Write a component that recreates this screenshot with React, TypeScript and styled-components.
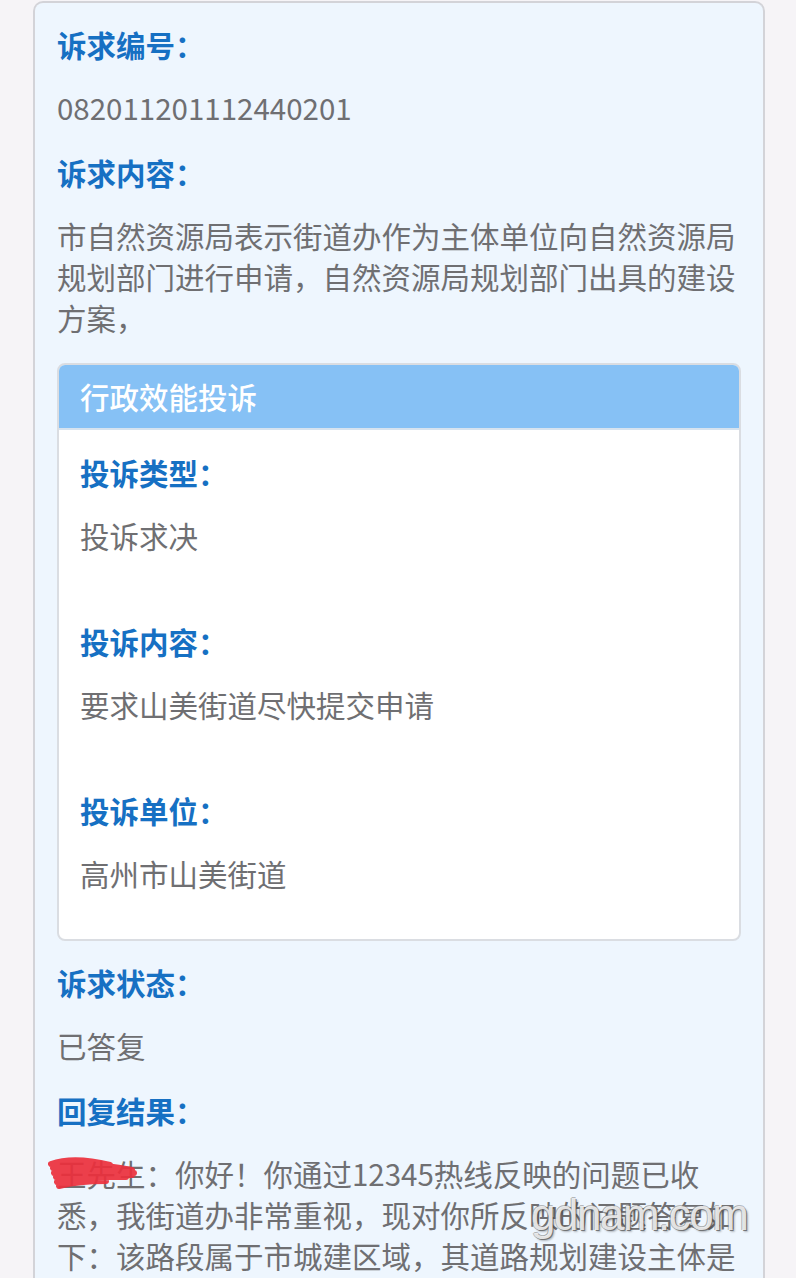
import React from "react";
import styled, { createGlobalStyle } from "styled-components";

const GlobalStyle = createGlobalStyle`
  html, body {
    margin: 0;
    padding: 0;
    background: #f6f4f7;
  }
  body {
    font-family: "Noto Sans CJK SC", "Noto Sans", sans-serif;
  }
`;

const Page = styled.div`
  height: 1278px;
  overflow: hidden;
  padding: 1px 31px 0 33px;
  box-sizing: border-box;
`;

const Card = styled.div`
  background: #eef6fe;
  border: 2px solid #d3d3d8;
  border-bottom: none;
  border-radius: 10px 10px 0 0;
  padding: 21px 22px 40px;
  min-height: 1300px;
  box-sizing: border-box;
`;

const Field = styled.div<{ $gap?: number }>`
  margin-bottom: ${(p) => (p.$gap ?? 24)}px;
`;

const Label = styled.div`
  font-size: 29.5px;
  line-height: 41px;
  font-weight: 700;
  color: #1670c3;
  margin-bottom: 22px;
`;

const Value = styled.div`
  position: relative;
  font-size: 29.5px;
  line-height: 41px;
  color: #6f6f72;
`;

const Complaint = styled.div`
  border: 2px solid #dadde2;
  border-radius: 8px;
  overflow: hidden;
  background: #ffffff;
  margin: 0 0 21px;
`;

const ComplaintHead = styled.div`
  background: #86c1f5;
  color: #ffffff;
  height: 63px;
  line-height: 63px;
  padding: 0 21px;
  font-size: 29.5px;
  font-weight: 500;
  border-bottom: 2px solid #d6e3ef;
`;

const ComplaintBody = styled.div`
  padding: 22px 21px 45px;
`;

const Scribble = styled.svg`
  position: absolute;
  left: -9px;
  top: 2px;
  width: 90px;
  height: 36px;
  pointer-events: none;
`;

const Watermark = styled.span`
  position: absolute;
  left: 474px;
  top: 38px;
  font-family: "Liberation Sans", sans-serif;
  font-size: 44px;
  line-height: 48px;
  letter-spacing: -1.5px;
  color: rgba(255, 255, 255, 0.82);
  text-shadow: 1px 1px 0 rgba(90, 90, 90, 0.75), -1px 0 0 rgba(120, 120, 120, 0.5),
    0 -1px 0 rgba(120, 120, 120, 0.5), 2px 2px 2px rgba(0, 0, 0, 0.25);
  pointer-events: none;
  white-space: nowrap;
`;

const complaintItems = [
  { label: "投诉类型：", value: "投诉求决" },
  { label: "投诉内容：", value: "要求山美街道尽快提交申请" },
  { label: "投诉单位：", value: "高州市山美街道" },
];

export default function App() {
  return (
    <>
      <GlobalStyle />
      <Page>
        <Card>
          <Field>
            <Label>诉求编号：</Label>
            <Value>082011201112440201</Value>
          </Field>
          <Field $gap={25}>
            <Label>诉求内容：</Label>
            <Value>
              市自然资源局表示街道办作为主体单位向自然资源局规划部门进行申请，自然资源局规划部门出具的建设方案，
            </Value>
          </Field>

          <Complaint>
            <ComplaintHead>行政效能投诉</ComplaintHead>
            <ComplaintBody>
              {complaintItems.map((item, i) => (
                <Field key={item.label} $gap={i === complaintItems.length - 1 ? 0 : 65}>
                  <Label>{item.label}</Label>
                  <Value>{item.value}</Value>
                </Field>
              ))}
            </ComplaintBody>
          </Complaint>

          <Field>
            <Label>诉求状态：</Label>
            <Value>已答复</Value>
          </Field>
          <Field>
            <Label>回复结果：</Label>
            <Value>
              王先生：你好！你通过12345热线反映的问题已收悉，我街道办非常重视，现对你所反映的问题答复如下：该路段属于市城建区域，其道路规划建设主体是市住建局。
              <Scribble viewBox="0 0 90 36">
                <path
                  d="M3 9 C20 3, 42 5, 62 10 M5 13 C26 8, 52 9, 84 15 M6 18 C28 12, 56 14, 86 18 M8 22 C30 16, 56 18, 84 20 M9 27 C30 21, 52 22, 78 22 M11 31 C26 27, 42 26, 58 26"
                  stroke="#ec2f3c"
                  strokeWidth="6"
                  strokeLinecap="round"
                  fill="none"
                  opacity="0.92"
                />
              </Scribble>
              <Watermark>gdnam.com</Watermark>
            </Value>
          </Field>
        </Card>
      </Page>
    </>
  );
}
